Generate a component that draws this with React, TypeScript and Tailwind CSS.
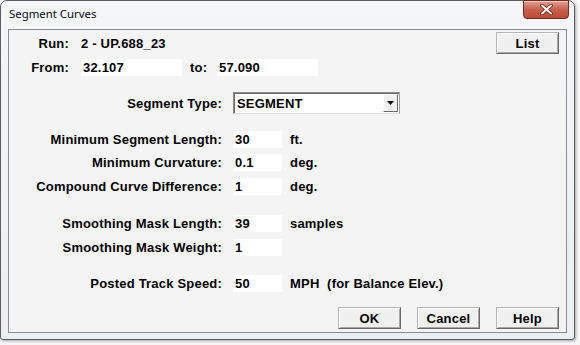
import React from "react";

const lbl = "font-bold text-[13px] tracking-[0.2px] text-black leading-none";

function Field({ w, value, cls = "" }: { w: string; value: string; cls?: string }) {
  return (
    <div className={`${w} h-[17px] bg-white flex items-center pl-[2px] ${lbl} ${cls}`}>{value}</div>
  );
}

function Btn({ children, w = "w-[63px]" }: { children: React.ReactNode; w?: string }) {
  return (
    <div
      className={`${w} h-[22px] bg-[#f0f0f0] border border-t-[#b4b4b4] border-l-[#b4b4b4] border-r-[#6a6a6a] border-b-[#6a6a6a] shadow-[inset_1px_1px_0_#ffffff,inset_-1px_-1px_0_#a8a8a8] flex items-center justify-center ${lbl}`}
    >
      {children}
    </div>
  );
}

function Row({ label, value, unit, mt }: { label: string; value: string; unit?: string; mt: string }) {
  return (
    <div className={`flex items-center h-[17px] ${mt}`}>
      <div className={`w-[213px] text-right ${lbl}`}>{label}</div>
      <Field w="w-[49px] ml-[11px]" value={value} />
      {unit && <div className={`ml-[8px] whitespace-pre ${lbl}`}>{unit}</div>}
    </div>
  );
}

export default function App() {
  return (
    <div className="w-[580px] h-[345px] bg-[#f7f7f7] overflow-hidden" style={{ fontFamily: '"Liberation Sans", Arial, sans-serif' }}>
      <div className="w-[575px] h-[340px] border border-[#5d5d5d] rounded-t-[7px] rounded-b-[3px] bg-gradient-to-b from-[#f4f6f8] to-[#eceff2] flex flex-col px-[7px] pb-[6px] shadow-[1px_1px_3px_rgba(0,0,0,0.35)]">
        <div className="h-[28px] flex items-start shrink-0">
          <div className="mt-[7px] ml-[1px] text-[11.4px] text-[#0b0b20] leading-none" style={{ fontFamily: '"Noto Sans", "Open Sans", sans-serif' }}>
            Segment Curves
          </div>
          <div className="ml-auto mr-[-2px] mt-[-1px] w-[46px] h-[19px] rounded-b-[4px] border border-[#6e2a20] bg-gradient-to-b from-[#e2a092] via-[#c9604b] to-[#bf4a36] flex items-center justify-center shadow-[inset_0_1px_0_rgba(255,255,255,0.5)]">
            <svg width="13" height="11" viewBox="0 0 13 11">
              <path d="M2 1.5 L11 9.5 M11 1.5 L2 9.5" stroke="#5a2418" strokeWidth="3.6" strokeLinecap="round" />
              <path d="M2 1.5 L11 9.5 M11 1.5 L2 9.5" stroke="#ffffff" strokeWidth="2" strokeLinecap="round" />
            </svg>
          </div>
        </div>
        <div className="flex-1 bg-[#f4f4f4] border border-[#8c8c8c] flex flex-col">
          <div className="flex items-center h-[22px] mt-[2px]">
            <div className={`w-[60px] text-right ${lbl}`}>Run:</div>
            <div className={`ml-[12px] ${lbl}`}>2 - UP.688_23</div>
            <div className="ml-auto mr-[7px]">
              <Btn>List</Btn>
            </div>
          </div>
          <div className="flex items-center h-[17px] mt-[5px]">
            <div className={`w-[60px] text-right ${lbl}`}>From:</div>
            <Field w="w-[101px] ml-[12px]" value="32.107" />
            <div className={`ml-[8px] w-[27px] ${lbl}`}>to:</div>
            <Field w="w-[101px]" value="57.090" />
          </div>
          <div className="flex items-center h-[22px] mt-[16px]">
            <div className={`w-[213px] text-right ${lbl}`}>Segment Type:</div>
            <div className="ml-[11px] w-[167px] h-[22px] border border-t-[#8a8a8a] border-l-[#8a8a8a] border-r-[#a0a0a0] border-b-[#dcdcdc] bg-white shadow-[inset_1px_1px_0_#6a6a6a] flex items-center">
              <div className={`pl-[3px] ${lbl}`}>SEGMENT</div>
              <div className="ml-auto mr-[1px] w-[15px] h-[18px] bg-[#f0f0f0] border border-t-[#ffffff] border-l-[#ffffff] border-r-[#6a6a6a] border-b-[#6a6a6a] flex items-center justify-center">
                <svg width="7" height="4" viewBox="0 0 7 4">
                  <path d="M0 0 H7 L3.5 4 Z" fill="#000" />
                </svg>
              </div>
            </div>
          </div>
          <Row label="Minimum Segment Length:" value="30" unit="ft." mt="mt-[17px]" />
          <Row label="Minimum Curvature:" value="0.1" unit="deg." mt="mt-[6px]" />
          <Row label="Compound Curve Difference:" value="1" unit="deg." mt="mt-[7px]" />
          <Row label="Smoothing Mask Length:" value="39" unit="samples" mt="mt-[20px]" />
          <Row label="Smoothing Mask Weight:" value="1" mt="mt-[7px]" />
          <Row label="Posted Track Speed:" value="50" unit="MPH  (for Balance Elev.)" mt="mt-[19px]" />
          <div className="flex justify-end gap-[16px] mt-[15px] mr-[7px]">
            <Btn>OK</Btn>
            <Btn>Cancel</Btn>
            <Btn>Help</Btn>
          </div>
        </div>
      </div>
    </div>
  );
}
